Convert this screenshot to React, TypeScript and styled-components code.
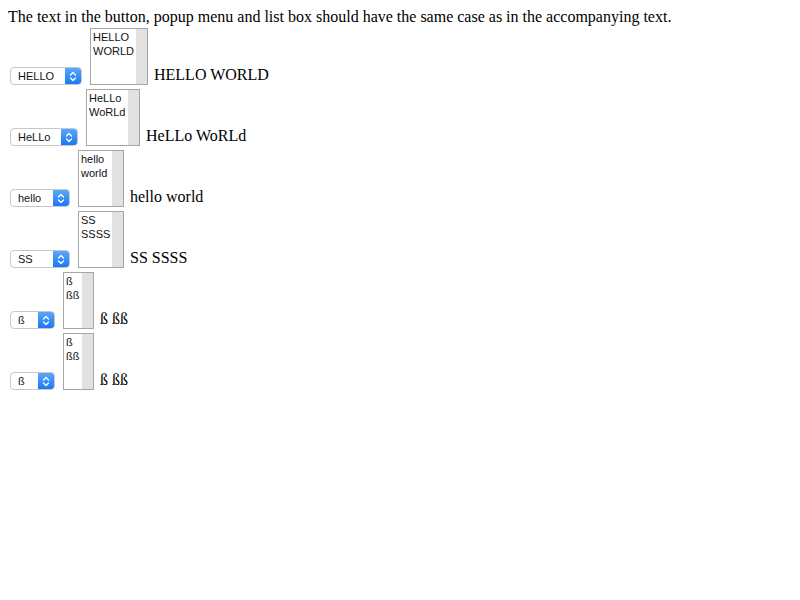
import React from 'react';
import styled, { createGlobalStyle } from 'styled-components';

const GlobalStyle = createGlobalStyle`
    body {
        margin: 8px;
        font-family: "Liberation Serif", "Times New Roman", serif;
        font-size: 16px;
        color: #000;
        background: #fff;
    }
`;

const Intro = styled.div`
    line-height: 18px;
`;

const Row = styled.div`
    display: flex;
    align-items: flex-end;
    padding: 2px 0;
`;

const PopupButton = styled.div<{ $width: number }>`
    display: flex;
    align-items: stretch;
    box-sizing: border-box;
    width: ${p => p.$width}px;
    height: 18px;
    margin-left: 2px;
    border: 1px solid #c8c8c8;
    border-radius: 4px;
    background: #fff;
    overflow: hidden;
    font-family: "Liberation Sans", Arial, sans-serif;
    font-size: 11px;
`;

const PopupLabel = styled.span`
    flex: 1;
    padding-left: 7px;
    line-height: 16px;
    color: #111;
`;

const PopupArrow = styled.span`
    width: 16px;
    display: flex;
    align-items: center;
    justify-content: center;
    background: linear-gradient(#5aa8fb, #1a78f5);
`;

const ListBox = styled.div<{ $width: number }>`
    display: flex;
    box-sizing: border-box;
    width: ${p => p.$width}px;
    height: 57px;
    margin-left: 8px;
    border: 1px solid #a6a6a6;
    background: #fff;
    font-family: "Liberation Sans", Arial, sans-serif;
    font-size: 11px;
`;

const ListItems = styled.div`
    flex: 1;
    padding: 1px 0 0 2px;
    line-height: 14px;
    color: #111;
    white-space: nowrap;
`;

const ScrollTrack = styled.div`
    width: 11px;
    background: #e1e1e1;
`;

const Caption = styled.span`
    margin-left: 6px;
    line-height: 18px;
    margin-bottom: 1px;
    white-space: nowrap;
`;

interface ICaseRow {
    first: string;
    second: string;
    buttonWidth: number;
    listWidth: number;
}

const rows: ICaseRow[] = [
    { first: 'HELLO', second: 'WORLD', buttonWidth: 72, listWidth: 58 },
    { first: 'HeLLo', second: 'WoRLd', buttonWidth: 68, listWidth: 54 },
    { first: 'hello', second: 'world', buttonWidth: 60, listWidth: 46 },
    { first: 'SS', second: 'SSSS', buttonWidth: 60, listWidth: 46 },
    { first: 'ß', second: 'ßß', buttonWidth: 45, listWidth: 31 },
    { first: 'ß', second: 'ßß', buttonWidth: 45, listWidth: 31 },
];

const Chevrons = () => (
    <svg width="8" height="11" viewBox="0 0 8 11">
        <path d="M1.5 4 L4 1.5 L6.5 4 M1.5 7 L4 9.5 L6.5 7" fill="none" stroke="#fff" strokeWidth="1.3" strokeLinecap="round" strokeLinejoin="round" />
    </svg>
);

export default function App() {
    return (
        <>
            <GlobalStyle />
            <Intro>The text in the button, popup menu and list box should have the same case as in the accompanying text.</Intro>
            {rows.map((row, i) => (
                <Row key={i}>
                    <PopupButton $width={row.buttonWidth}>
                        <PopupLabel>{row.first}</PopupLabel>
                        <PopupArrow><Chevrons /></PopupArrow>
                    </PopupButton>
                    <ListBox $width={row.listWidth}>
                        <ListItems>
                            <div>{row.first}</div>
                            <div>{row.second}</div>
                        </ListItems>
                        <ScrollTrack />
                    </ListBox>
                    <Caption>{row.first} {row.second}</Caption>
                </Row>
            ))}
        </>
    );
}
